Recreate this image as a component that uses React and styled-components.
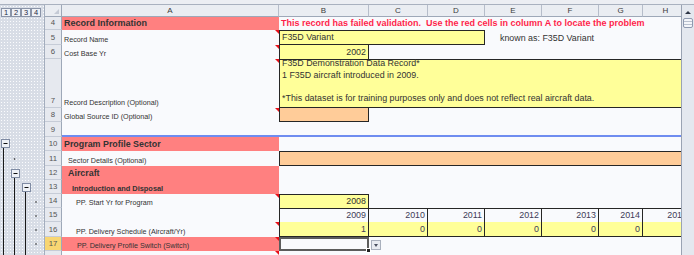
import React from "react";
import styled, { createGlobalStyle, css } from "styled-components";

// outline gutter 45 | row heads 17 | A..H
const COLS = "17px 217px 90px 59px 57px 57px 57px 44px 46px";

const fills = { red: "#ff8080", yellow: "#ffff99", orange: "#ffcc99" };

const GlobalStyle = createGlobalStyle`
  html, body { margin: 0; padding: 0; background: #f9fafd; }
  body { font-family: "Liberation Sans", Arial, sans-serif; color: #333; }
`;

const Window = styled.div`
  width: 694px;
  height: 255px;
  overflow: hidden;
  display: flex;
  flex-direction: column;
  background: #f9fafd;
`;

const TopStrip = styled.div`
  height: 5px;
  flex: none;
  box-sizing: border-box;
  background: #eceef3;
  border-bottom: 1px solid #a9b1bf;
`;

const Body = styled.div`
  flex: 1;
  display: flex;
  min-height: 0;
`;

const Gutter = styled.div`
  width: 45px;
  flex: none;
  box-sizing: border-box;
  display: flex;
  flex-direction: column;
  border-right: 1px solid #a3adbd;
  background-color: #d8dde6;
  background-image: radial-gradient(circle, #fbfcfe 0.7px, transparent 0.9px);
  background-size: 3px 3px;
`;

const LevelBar = styled.div`
  height: 12px;
  flex: none;
  box-sizing: border-box;
  display: flex;
  padding: 3px 0 0 1px;
`;

const LevelButton = styled.span`
  width: 10px;
  height: 9px;
  box-sizing: border-box;
  border: 1px solid #8a94a8;
  background: #eef1f6;
  font-size: 7.5px;
  line-height: 7px;
  text-align: center;
  color: #1f2a44;
`;

const OutlineTree = styled.svg`
  display: block;
  flex: none;
`;

const Sheet = styled.div`
  width: 636px;
  flex: none;
  overflow: hidden;
  display: flex;
  flex-direction: column;
`;

const HeaderRow = styled.div`
  display: grid;
  grid-template-columns: ${COLS};
  height: 12px;
  flex: none;
`;

const ColHead = styled.div`
  position: relative;
  box-sizing: border-box;
  background: #eaedf2;
  border-right: 1px solid #b6bdca;
  border-bottom: 1px solid #9ea8b8;
  font-size: 8px;
  line-height: 11px;
  text-align: center;
  color: #3a3a3a;
`;

const Corner = styled(ColHead)`
  border-right-color: #9ea8b8;
  &::after {
    content: "";
    position: absolute;
    right: 2px;
    bottom: 2px;
    border-left: 5px solid transparent;
    border-bottom: 5px solid #c4cad5;
  }
`;

const Row = styled.div`
  display: grid;
  grid-template-columns: ${COLS};
  height: ${(p) => p.$h}px;
  flex: none;
`;

const RowHead = styled.div`
  box-sizing: border-box;
  display: flex;
  align-items: flex-end;
  justify-content: center;
  padding-bottom: 2px;
  background: ${(p) => (p.$active ? "#f8d672" : "#e6e9ef")};
  border-right: 1px solid #9ea8b8;
  border-bottom: 1px solid #c6ccd7;
  font-size: 7.8px;
  line-height: 1;
  color: #555;
`;

const edge = (side) => (p) =>
  p.$b && p.$b.includes(side[0])
    ? `border-${side}: ${p.$bw || 1}px solid ${p.$bc || "#262626"};`
    : "";

const Cell = styled.div`
  grid-column: span ${(p) => p.$span || 1};
  position: relative;
  box-sizing: border-box;
  display: flex;
  align-items: flex-end;
  justify-content: ${(p) => (p.$right ? "flex-end" : "flex-start")};
  padding: 0 2px 2px ${(p) => p.$pad ?? 2}px;
  background: ${(p) => fills[p.$fill] || "transparent"};
  color: ${(p) => p.$color || "#333"};
  font-size: ${(p) => p.$size || 7.2}px;
  font-weight: ${(p) => (p.$bold ? 700 : 400)};
  line-height: 1;
  white-space: pre;
  ${edge("top")}
  ${edge("left")}
  ${edge("bottom")}
  ${edge("right")}
  ${(p) =>
    p.$note &&
    css`
      &::after {
        content: "";
        position: absolute;
        top: 0;
        right: 0;
        border-left: 4px solid transparent;
        border-top: 4px solid #e8101a;
      }
    `}
`;

const Memo = styled(Cell)`
  flex-direction: column;
  align-items: flex-start;
  justify-content: flex-start;
`;

const MemoText = styled.p`
  margin: -2px 0 0;
  white-space: pre-line;
  line-height: 11.6px;
`;

const Selected = styled(Cell)`
  box-shadow: inset 0 0 0 2px #5c5c5c;
  &::after {
    content: "";
    position: absolute;
    right: -2px;
    bottom: -2px;
    width: 3px;
    height: 3px;
    background: #222;
    border: 1px solid #fff;
  }
`;

const DropButton = styled.span`
  position: absolute;
  left: calc(100% + 2px);
  top: 3px;
  width: 10px;
  height: 10px;
  box-sizing: border-box;
  border: 1px solid #a9b0bd;
  background: #e8ebf1;
  display: flex;
  align-items: center;
  justify-content: center;
  &::before {
    content: "";
    border-left: 2.5px solid transparent;
    border-right: 2.5px solid transparent;
    border-top: 3px solid #4a5060;
  }
`;

const Scrollbar = styled.div`
  width: 13px;
  flex: none;
  box-sizing: border-box;
  border-left: 1px solid #9aa3b3;
  background: #e4e8ef;
  display: flex;
  flex-direction: column;
  align-items: center;
  gap: 2px;
  padding-top: 3px;
`;

const ScrollArrow = styled.div`
  width: 10px;
  height: 8px;
  display: flex;
  align-items: center;
  justify-content: center;
  &::before {
    content: "";
    border-left: 3px solid transparent;
    border-right: 3px solid transparent;
    border-bottom: 3px solid #2d3445;
  }
`;

const Thumb = styled.div`
  width: 10px;
  height: 10px;
  box-sizing: border-box;
  border: 1px solid #8f9ab0;
  border-radius: 2px;
  background: repeating-linear-gradient(#f4f6fa 0 2px, #b9c1cf 2px 3px);
`;

function Outline() {
  const minus = (x, y) => (
    <g>
      <rect x={x + 0.5} y={y + 0.5} width="8" height="8" fill="#eef1f6" stroke="#7f8ba3" />
      <line x1={x + 2.5} x2={x + 6.5} y1={y + 4.5} y2={y + 4.5} stroke="#111" />
    </g>
  );
  return (
    <OutlineTree width="44" height="238" viewBox="0 17 44 238">
      <line x1="3.5" x2="3.5" y1="148" y2="255" stroke="#1a1a1a" />
      <line x1="14.5" x2="14.5" y1="178" y2="255" stroke="#1a1a1a" />
      <line x1="25.5" x2="25.5" y1="192" y2="255" stroke="#1a1a1a" />
      {minus(1, 139)}
      {minus(11, 169)}
      {minus(22, 183)}
      <circle cx="14.5" cy="159" r="0.8" fill="#222" />
      {[202, 216, 230, 244].map((y) => (
        <circle key={y} cx="36" cy={y} r="0.8" fill="#222" />
      ))}
    </OutlineTree>
  );
}

const years = ["2009", "2010", "2011", "2012", "2013", "2014"];

export default function App() {
  return (
    <>
      <GlobalStyle />
      <Window>
        <TopStrip />
        <Body>
          <Gutter>
            <LevelBar>
              {[1, 2, 3, 4].map((n) => (
                <LevelButton key={n}>{n}</LevelButton>
              ))}
            </LevelBar>
            <Outline />
          </Gutter>

          <Sheet>
            <HeaderRow>
              <Corner />
              {["A", "B", "C", "D", "E", "F", "G", "H"].map((c) => (
                <ColHead key={c}>{c}</ColHead>
              ))}
            </HeaderRow>

            <Row $h={13}>
              <RowHead>4</RowHead>
              <Cell $fill="red" $bold $size={9}>Record Information</Cell>
              <Cell $span={7} $bold $size={9} $color="#ff1f4b">
                This record has failed validation.  Use the red cells in column A to locate the problem
              </Cell>
            </Row>

            <Row $h={15}>
              <RowHead>5</RowHead>
              <Cell $note>Record Name</Cell>
              <Cell $span={3} $fill="yellow" $b="tlbr" $size={8.9}>F35D Variant</Cell>
              <Cell $span={4} $size={8.9} $pad={15}>known as: F35D Variant</Cell>
            </Row>

            <Row $h={14}>
              <RowHead>6</RowHead>
              <Cell $note>Cost Base Yr</Cell>
              <Cell $fill="yellow" $b="lr" $right $size={8.9}>2002</Cell>
              <Cell $span={6} />
            </Row>

            <Row $h={49}>
              <RowHead>7</RowHead>
              <Cell $note>Record Description (Optional)</Cell>
              <Memo $span={7} $fill="yellow" $b="tlb" $size={8.9}>
                <MemoText>
                  {"F35D Demonstration Data Record*\n1 F35D aircraft introduced in 2009.\n\n*This dataset is for training purposes only and does not reflect real aircraft data."}
                </MemoText>
              </Memo>
            </Row>

            <Row $h={14}>
              <RowHead>8</RowHead>
              <Cell $note>Global Source ID (Optional)</Cell>
              <Cell $fill="orange" $b="lrb" />
              <Cell $span={6} />
            </Row>

            <Row $h={15}>
              <RowHead>9</RowHead>
              <Cell $span={8} $b="b" $bw={2} $bc="#6f8cf0" />
            </Row>

            <Row $h={14}>
              <RowHead>10</RowHead>
              <Cell $fill="red" $bold $size={8.9}>Program Profile Sector</Cell>
              <Cell $span={7} />
            </Row>

            <Row $h={15}>
              <RowHead>11</RowHead>
              <Cell $pad={6}>Sector Details (Optional)</Cell>
              <Cell $span={7} $fill="orange" $b="tlb" />
            </Row>

            <Row $h={14}>
              <RowHead>12</RowHead>
              <Cell $fill="red" $bold $size={8.9} $pad={6}>Aircraft</Cell>
              <Cell $span={7} />
            </Row>

            <Row $h={14}>
              <RowHead>13</RowHead>
              <Cell $fill="red" $bold $size={7.4} $pad={10}>Introduction and Disposal</Cell>
              <Cell $span={7} />
            </Row>

            <Row $h={14}>
              <RowHead>14</RowHead>
              <Cell $note $pad={14}>PP. Start Yr for Program</Cell>
              <Cell $fill="yellow" $b="tlr" $right $size={8.9}>2008</Cell>
              <Cell $span={6} />
            </Row>

            <Row $h={14}>
              <RowHead>15</RowHead>
              <Cell />
              {years.map((y, i) => (
                <Cell key={y} $b={i === 0 ? "tlr" : "tr"} $right $size={8.9} $color="#3d3b58">
                  {y}
                </Cell>
              ))}
              <Cell $b="t" $right $size={8.9} $color="#3d3b58">2015</Cell>
            </Row>

            <Row $h={15}>
              <RowHead>16</RowHead>
              <Cell $note $pad={14}>PP. Delivery Schedule (Aircraft/Yr)</Cell>
              {["1", "0", "0", "0", "0", "0"].map((v, i) => (
                <Cell key={i} $fill="yellow" $b={i === 0 ? "lrb" : "rb"} $right $size={8.9} $color="#3d3b58">
                  {v}
                </Cell>
              ))}
              <Cell $fill="yellow" $b="b" />
            </Row>

            <Row $h={14}>
              <RowHead $active>17</RowHead>
              <Cell $fill="red" $note $pad={15}>PP. Delivery Profile Switch (Switch)</Cell>
              <Selected>
                <DropButton />
              </Selected>
              <Cell $span={6} />
            </Row>

            <Row $h={15}>
              <RowHead />
              <Cell $note />
              <Cell $span={7} />
            </Row>
          </Sheet>

          <Scrollbar>
            <ScrollArrow />
            <Thumb />
          </Scrollbar>
        </Body>
      </Window>
    </>
  );
}
